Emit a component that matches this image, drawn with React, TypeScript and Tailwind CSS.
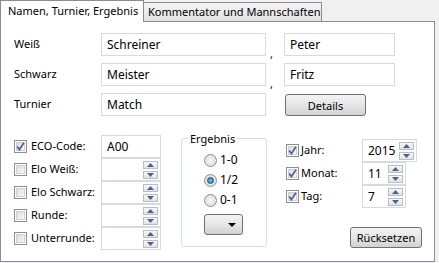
import React from 'react';

// Win7-ish dialog: two tabs, name fields, game details

const FONT = "font-['Noto_Sans','Open_Sans',sans-serif]";

function Check({ checked }: { checked?: boolean }) {
  return (
    <span className="relative flex h-[13px] w-[13px] shrink-0 items-center justify-center border border-[#8e8f8f] bg-white">
      <span className="absolute inset-[1px] border border-[#d0d0d0] bg-linear-to-br from-[#dcdcdc] to-[#f8f8f8]" />
      {checked && (
        <svg className="relative" width="9" height="9" viewBox="0 0 9 9">
          <path d="M1.2 4.6 L3.4 7.6 L7.9 0.8" fill="none" stroke="#4a5f9b" strokeWidth="1.7" />
        </svg>
      )}
    </span>
  );
}

function Radio({ checked, label }: { checked?: boolean; label: string }) {
  return (
    <div className="flex h-[20px] items-center gap-[3px]">
      <span className="flex h-[13px] w-[13px] items-center justify-center rounded-full border border-[#8e8f8f] bg-radial from-[#f8f8f8] to-[#d6d6d6]">
        {checked && <span className="h-[7px] w-[7px] rounded-full border border-[#1b4e73] bg-radial from-[#7cc4ec] to-[#1d6ea8]" />}
      </span>
      <span className="text-[12px] leading-none">{label}</span>
    </div>
  );
}

function Arrows() {
  return (
    <div className="flex flex-col gap-[2px]">
      <span className="flex h-[8px] w-[15px] items-center justify-center border border-[#b8bec8] bg-linear-to-b from-[#f8f8f8] to-[#e2e2e2]">
        <svg width="7" height="4" viewBox="0 0 7 4"><path d="M0 4 L3.5 0 L7 4 Z" fill="#4d5f8c" /></svg>
      </span>
      <span className="flex h-[8px] w-[15px] items-center justify-center border border-[#b8bec8] bg-linear-to-b from-[#f8f8f8] to-[#e2e2e2]">
        <svg width="7" height="4" viewBox="0 0 7 4"><path d="M0 0 L7 0 L3.5 4 Z" fill="#4d5f8c" /></svg>
      </span>
    </div>
  );
}

function Spin({ value, className }: { value?: string; className: string }) {
  return (
    <div className={`flex items-center justify-between border border-[#d7dbe0] bg-white pl-[5px] pr-[2px] ${className}`}>
      <span className="text-[12px] leading-none">{value}</span>
      <Arrows />
    </div>
  );
}

function Button({ children, className }: { children: React.ReactNode; className: string }) {
  return (
    <div className={`flex items-center justify-center rounded-[3px] border border-[#707070] bg-linear-to-b from-[#f3f3f3] via-[#e6e6e6] to-[#d2d2d2] text-[11px] leading-none ${className}`}>
      {children}
    </div>
  );
}

const Field = ({ value, className }: { value: string; className: string }) => (
  <div className={`flex items-center border border-[#d7dbe0] bg-white pl-[5px] text-[12px] ${className}`}>{value}</div>
);

const Comma = () => (
  <div className="flex flex-col pl-[4px] pt-[15px] text-[11px] leading-[11px]">,</div>
);

export default function App() {
  const left = [
    { label: 'ECO-Code:', checked: true, eco: 'A00' },
    { label: 'Elo Weiß:' },
    { label: 'Elo Schwarz:' },
    { label: 'Runde:' },
    { label: 'Unterrunde:' },
  ];

  return (
    <div className={`h-[263px] w-[439px] bg-[#f0f0f0] text-black ${FONT}`}>
      <div className="flex h-[21px] items-end">
        <div className="relative z-10 -mb-px flex h-[22px] w-[144px] items-center border border-b-0 border-[#898c95] bg-white pl-[7px] text-[11px]">
          Namen, Turnier, Ergebnis
        </div>
        <div className="flex h-[19px] w-[178px] items-center border border-b-0 border-l-0 border-[#898c95] bg-linear-to-b from-[#f4f4f4] to-[#e2e2e2] pl-[4px] text-[11px]">
          Kommentator und Mannschaften
        </div>
      </div>

      <div className="h-[241px] w-[435px] border border-[#898c95] bg-white pl-[13px] pt-[11px]">
        <div className="grid grid-cols-[87px_165px_18px_111px] grid-rows-[23px_23px_23px] gap-y-[7px]">
          <div className="flex items-center text-[11px]">Weiß</div>
          <Field value="Schreiner" className="h-[23px]" />
          <Comma />
          <Field value="Peter" className="h-[23px]" />

          <div className="flex items-center text-[11px]">Schwarz</div>
          <Field value="Meister" className="h-[23px]" />
          <Comma />
          <Field value="Fritz" className="h-[23px]" />

          <div className="flex items-center text-[11px]">Turnier</div>
          <Field value="Match" className="h-[23px]" />
          <div />
          <Button className="ml-[1px] mt-[1px] h-[22px] w-[81px]">Details</Button>
        </div>

        <div className="mt-[15px] flex items-start">
          <div className="grid grid-cols-[87px_60px] pt-[4px]">
            {left.map((r) => (
              <React.Fragment key={r.label}>
                <div className="flex h-[23px] items-center gap-[4px] text-[11px]">
                  <Check checked={r.checked} />
                  <span>{r.label}</span>
                </div>
                {r.eco ? (
                  <Field value={r.eco} className="h-[23px]" />
                ) : (
                  <Spin className="h-[23px]" />
                )}
              </React.Fragment>
            ))}
          </div>

          <fieldset className="ml-[20px] w-[86px] rounded-[3px] border border-[#d5dfe5] pb-[11px]">
            <legend className="ml-[6px] px-[2px] text-[11px] leading-[15px]">Ergebnis</legend>
            <div className="pl-[22px] pt-[4px]">
              <Radio label="1-0" />
              <Radio label="1/2" checked />
              <Radio label="0-1" />
              <Button className="mt-[4px] h-[21px] w-[39px] justify-end pr-[6px]">
                <svg width="8" height="4" viewBox="0 0 8 4"><path d="M0 0 L8 0 L4 4 Z" fill="#000" /></svg>
              </Button>
            </div>
          </fieldset>

          <div className="ml-[19px] flex w-[136px] flex-col pt-[8px]">
            <div className="grid grid-cols-[76px_60px]">
              <div className="flex h-[23px] items-center gap-[2px] text-[11px]">
                <Check checked />
                <span>Jahr:</span>
              </div>
              <Spin value="2015" className="h-[23px] w-[55px]" />
              <div className="flex h-[23px] items-center gap-[2px] text-[11px]">
                <Check checked />
                <span>Monat:</span>
              </div>
              <Spin value="11" className="h-[23px] w-[44px]" />
              <div className="flex h-[23px] items-center gap-[2px] text-[11px]">
                <Check checked />
                <span>Tag:</span>
              </div>
              <Spin value="7" className="h-[23px] w-[44px]" />
            </div>
            <Button className="mt-[19px] h-[21px] w-[72px] self-end">Rücksetzen</Button>
          </div>
        </div>
      </div>
    </div>
  );
}
